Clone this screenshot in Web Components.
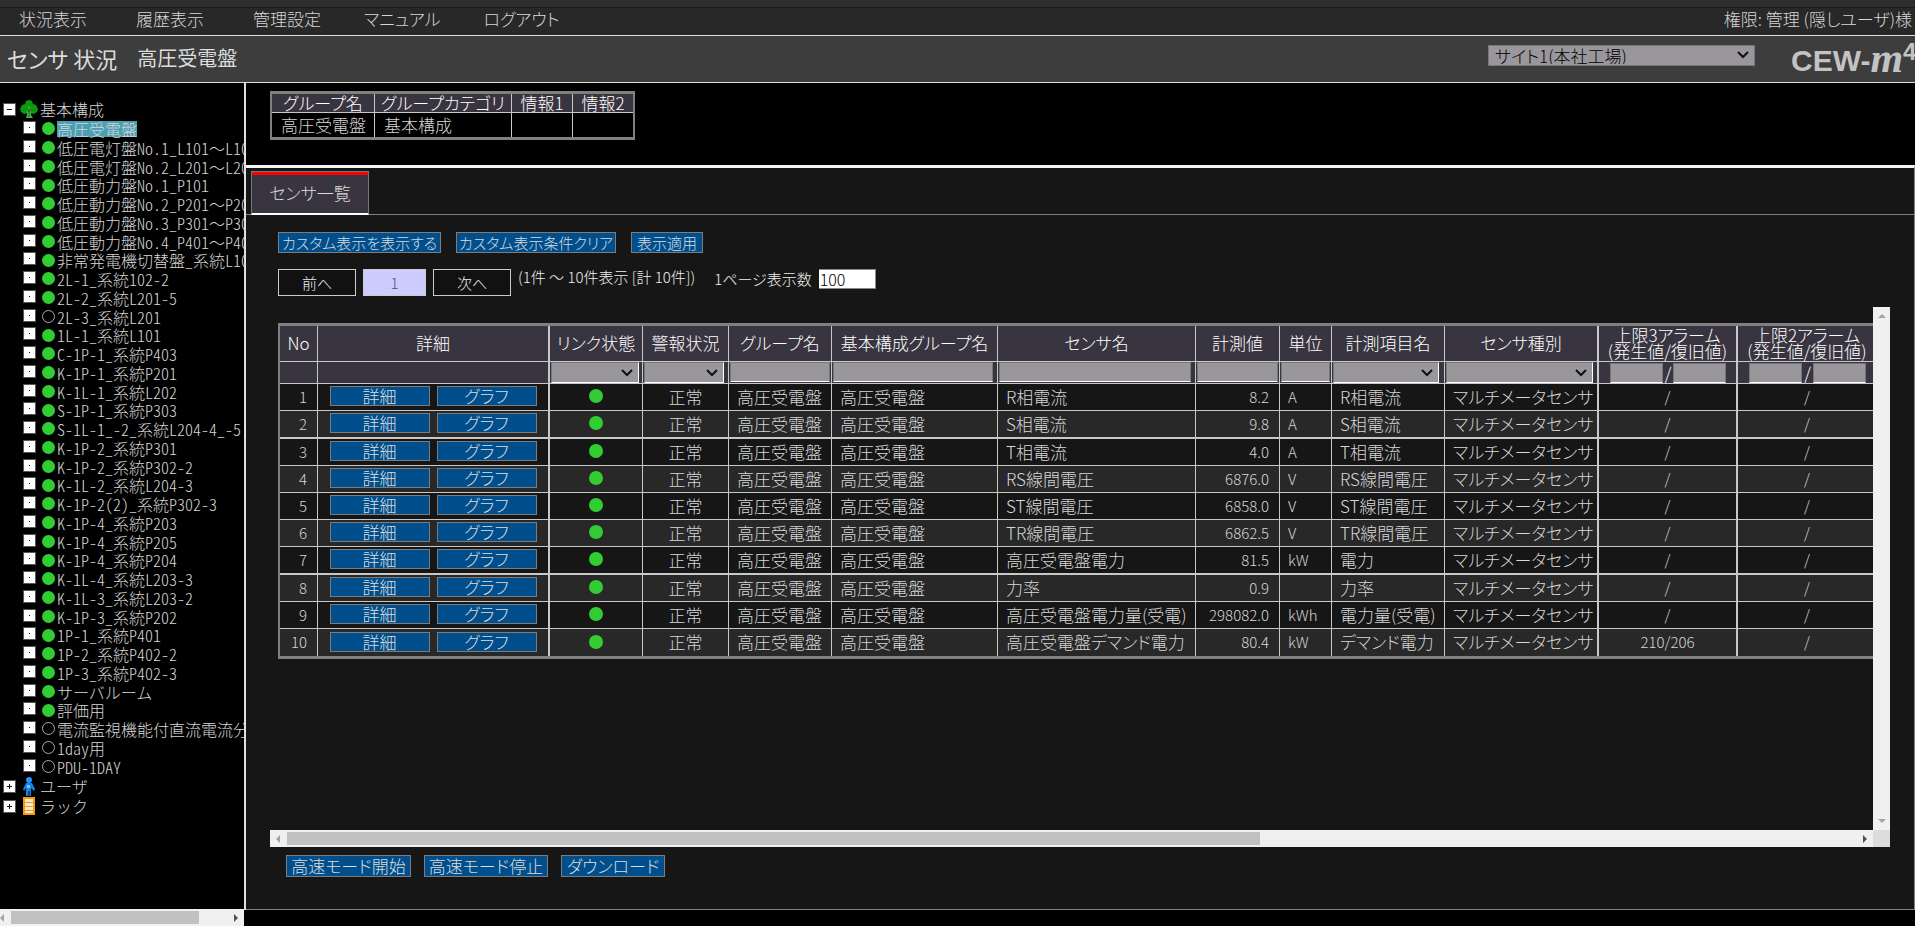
<!DOCTYPE html>
<html lang="ja">
<head>
<meta charset="utf-8">
<title>センサ状況 - CEW-m4</title>
<style>
  html, body { margin: 0; background: #000; }
  body { font-family: "Noto Sans CJK JP", sans-serif; font-size: 17px; color: #d6d6d6; font-weight: 300; }
</style>
</head>
<body>
<monitor-app></monitor-app>
<script>
const define = (name, css, html) => customElements.define(name, class extends HTMLElement {
  connectedCallback() {
    if (this.shadowRoot) return;
    const root = this.attachShadow({ mode: "open" });
    const body = typeof html === "function" ? html(this) : html;
    root.innerHTML = `<style>*{box-sizing:border-box}:host{box-sizing:border-box}${css}</style>${body}`;
  }
});
const CHEVRON = `<svg viewBox="0 0 12 8" width="12" height="8" aria-hidden="true"><path d="M1 1l5 5 5-5" fill="none" stroke="#111" stroke-width="2"/></svg>`;

/* Top menu */
define("menu-bar", `
  :host { display: flex; align-items: center; height: 36px; padding: 2px 3px 0 19px; border-bottom: 1px solid #e0e0e0;
    background: linear-gradient(#2e2e2e 7px, #1c1c1c 7px, #1c1c1c 8px, #282828 8px); font-feature-settings: "palt"; line-height: 24px; }
  nav { display: flex; gap: 49px; flex: 1; }
  a { color: #d6d6d6; text-decoration: none; }
  .kana { margin-left: -6px; }
`, `<nav><a href="#">状況表示</a><a href="#">履歴表示</a><a href="#">管理設定</a><a class="kana" href="#">マニュアル</a><a class="kana" href="#">ログアウト</a></nav><span>権限: 管理 (隠しユーザ)様</span>`);

/* Drop-down with its own arrow */
define("pick-list", `
  :host { display: block; height: 21px; }
  div { display: grid; height: 100%; }
  select, svg { grid-area: 1 / 1; }
  select { appearance: none; width: 100%; min-width: 0; height: 100%; margin: 0; padding: 0 24px 0 6px; border: 1px solid #777; border-radius: 0;
    background: #99979c; color: #000; font: inherit; font-size: 17px; line-height: 17px; font-feature-settings: "palt"; }
  svg { justify-self: end; align-self: center; margin-right: 6px; pointer-events: none; }
  :host([raised]) select { border-color: #777 #fff #fff #777; }
`, el => `<div><select aria-label="${el.getAttribute("label")}"><option>${el.getAttribute("value") || ""}</option></select>${CHEVRON}</div>`);

/* Product logo */
define("brand-logo", `
  :host { display: flex; width: 124px; height: 47px; padding-top: 4px; overflow: hidden; color: #c3c3c3; white-space: nowrap; align-items: center; }
  b { font: bold 30px/40px "Liberation Sans", sans-serif; }
  i { font: italic bold 42px/36px "Liberation Serif", serif; align-self: flex-start; }
  sup { font: bold 24px/24px "Liberation Sans", sans-serif; align-self: flex-start; }
`, `<b>CEW-</b><i>m</i><sup>4</sup>`);

define("title-bar", `
  :host { display: flex; align-items: center; height: 47px; padding-left: 7px; background: #3d3d3d; border-bottom: 1px solid #e0e0e0; color: #dcdcdc; }
  h1, h2 { margin: 0 0 2px; font-weight: 400; font-feature-settings: "palt"; }
  h1 { font-size: 22px; line-height: 32px; }
  h2 { font-size: 20px; line-height: 32px; margin-left: 20px; flex: 1; }
  pick-list { width: 267px; margin: 0 36px 8px 0; }
`, `<h1>センサ 状況</h1><h2>高圧受電盤</h2><pick-list label="サイト" value="サイト1(本社工場)"></pick-list><brand-logo></brand-logo>`);

/* Scroll bar: direction from an attribute, thumb length from --thumb */
define("scroll-strip", `
  :host { display: flex; align-items: center; height: 17px; background: #f0f0f0; }
  :host([vertical]) { flex-direction: column; width: 17px; height: auto; justify-content: space-between; }
  .rail { flex: 1; height: 13px; }
  .thumb { height: 13px; width: var(--thumb, 0); background: #c1c1c1; }
  svg { flex: none; }
`, el => {
  const v = el.hasAttribute("vertical"), end = v ? "#a3a3a3" : "#505050";
  return `<svg width="17" height="17"><path fill="#a3a3a3" d="${v ? "M5 11l4-4 4 4z" : "M10 5l-4 4 4 4z"}"/></svg>
  ${v ? "" : `<div class="rail"><div class="thumb"></div></div>`}
  <svg width="17" height="17"><path fill="${end}" d="${v ? "M5 6l4 4 4-4z" : "M7 5l4 4-4 4z"}"/></svg>`;
});

/* Navigation tree; a leading "-" marks an idle group */
const NODES = ["高圧受電盤","低圧電灯盤No.1_L101～L104","低圧電灯盤No.2_L201～L204","低圧動力盤No.1_P101","低圧動力盤No.2_P201～P204","低圧動力盤No.3_P301～P304","低圧動力盤No.4_P401～P404","非常発電機切替盤_系統L101","2L-1_系統102-2","2L-2_系統L201-5","-2L-3_系統L201","1L-1_系統L101","C-1P-1_系統P403","K-1P-1_系統P201","K-1L-1_系統L202","S-1P-1_系統P303","S-1L-1_-2_系統L204-4_-5","K-1P-2_系統P301","K-1P-2_系統P302-2","K-1L-2_系統L204-3","K-1P-2(2)_系統P302-3","K-1P-4_系統P203","K-1P-4_系統P205","K-1P-4_系統P204","K-1L-4_系統L203-3","K-1L-3_系統L203-2","K-1P-3_系統P202","1P-1_系統P401","1P-2_系統P402-2","1P-3_系統P402-3","サーバルーム","評価用","-電流監視機能付直流電流分電盤","-1day用","-PDU-1DAY"];
const TREE = `<svg width="18" height="18" viewBox="0 0 18 18"><path fill="#0a9a0a" d="M9 0l3 1 1 3 3 1 2 4-1 3-3 2-4-1-1 0-5 1-3-2-1-3 2-4 3-1 1-3z"/><path fill="#4cae4c" d="M7 9l2-3 2 3v6l2 3H6l1-3z"/><path d="M9 8v9M7 9l2 3 2-3" stroke="#0b6b0b" fill="none"/></svg>`;
const USER = `<svg width="18" height="19" viewBox="0 0 18 19"><circle cx="9" cy="3" r="3" fill="#2196ff"/><path fill="#1583e8" d="M6 6h6l3 6-1 2-3-3v8H9.500v-5h-1v5H6v-8l-2 3-1-2z"/><path fill="#7cc4ff" d="M7 8h3v3H7z"/></svg>`;
const RACK = `<svg width="18" height="18" viewBox="0 0 18 18"><path fill="#f59a14" d="M3 0h12v18H3z"/><path fill="#ffeac4" d="M5 2h8v3H5zM5 6h8v3H5zM5 10h8v3H5zM5 14h8v2H5z"/></svg>`;
define("tree-node", `
  :host { display: flex; align-items: center; height: 19px; white-space: nowrap; font-size: 16px; line-height: 16px; font-feature-settings: "hwid"; }
  button { flex: none; width: 13px; height: 13px; padding: 0; border: 1px solid #555; background: #fff; margin: 0 6px 3px 23px; display: grid; place-items: center; }
  .dot { flex: none; width: 13px; height: 13px; border-radius: 50%; background: #32cd32; margin-right: 2px; }
  .wide { font-feature-settings: normal; }
  :host([idle]) .dot { background: none; border: 1px solid #aaa; }
  a { color: #d6d6d6; text-decoration: none; }
  :host([selected]) a { background: #4a9fb3; height: 16px; }
  :host([root]) { height: 20px; }
  :host([root]) button { margin: 0 4px 0 3px; }
  :host([root]) a { margin-left: 2px; }
  svg { flex: none; display: block; }
`, el => {
  const s = el.getAttribute("sign"), d = s === "-" ? "M3 5h5v1H3z" : s === "+" ? "M3 5h5v1H3zM5 3h1v5H5z" : "M5 5h1v1H5z";
  return `<button aria-label="開閉"><svg width="11" height="11"><path d="${d}" fill="#111"/></svg></button>
  ${el.hasAttribute("root") ? "<slot></slot>" : `<span class="dot"></span>`}<a href="#">${el.getAttribute("label").replace("～", `<span class="wide">～</span>`)}</a>`;
});
define("side-tree", `
  :host { display: flex; flex-direction: column; width: 244px; flex: none; overflow: hidden; }
  .list { flex: 1; padding-top: 16px; }
  .kids tree-node:nth-child(4n) { height: 18px; }
  scroll-strip { --thumb: 188px; margin-left: -6px; }
`, `<div class="list"><tree-node root sign="-" label="基本構成">${TREE}</tree-node>
  <div class="kids">${NODES.map((n, i) => { const idle = n[0] === "-"; return `<tree-node label="${idle ? n.slice(1) : n}" ${idle ? "idle" : ""} ${i ? "" : "selected"}></tree-node>`; }).join("")}</div>
  <tree-node root sign="+" label="ユーザ">${USER}</tree-node><tree-node root sign="+" label="ラック">${RACK}</tree-node></div><scroll-strip></scroll-strip>`);

/* Summary of the selected group */
define("group-summary", `
  :host { display: block; padding: 8px 24px 25px; }
  table { border-collapse: separate; border-spacing: 0; border: solid #808080; border-width: 3px 2px; table-layout: fixed; width: 365px; font-feature-settings: "palt"; }
  th, td { padding: 0; height: 24px; line-height: 18px; border-right: 1px solid #c8c8c8; }
  th:last-child, td:last-child { border-right: 0; }
  th { height: 19px; background: #393540; font-weight: 300; color: #fff; border-bottom: 1px solid #c8c8c8; }
  td { padding-left: 9px; }
`, `<table><colgroup><col style="width:103px"><col style="width:137px"><col style="width:61px"><col></colgroup>
  <tr><th>グループ名</th><th>グループカテゴリ</th><th>情報1</th><th>情報2</th></tr>
  <tr><td>高圧受電盤</td><td>基本構成</td><td></td><td></td></tr></table>`);

define("tab-strip", `
  :host { display: flex; padding: 3px 0 0 5px; height: 47px; background: linear-gradient(#808080, #808080) 0 46px / 100% 1px no-repeat; }
  button { width: 118px; height: 44px; border: 1px solid #777; border-bottom: 2px solid #fff; background: linear-gradient(#f00 3px, #393540 3px);
    color: #dcdcdc; font: inherit; font-feature-settings: "palt"; }
`, `<button role="tab" aria-selected="true">センサ一覧</button>`);

define("action-button", `
  :host { display: block; }
  button { display: block; width: 100%; height: var(--h, 22px); padding: 0; border: 1px solid #7c7c7c; background: #004f8c; color: #dcdcdc; font: inherit; line-height: 16px; white-space: nowrap; font-feature-settings: "palt"; }
`, `<button><slot></slot></button>`);

define("page-controls", `
  :host { display: block; padding: 17px 32px 0; font-size: 15px; }
  .row { display: flex; gap: 15px; }
  .pager { margin-top: 16px; gap: 7px; align-items: flex-start; color: #f0f0f0; line-height: 16px; font-feature-settings: "palt"; }
  action-button { --h: 21px; }
  button { height: 27px; width: 78px; padding: 0; border: 1px solid #ccc; background: #111; color: #f0f0f0; font: inherit; line-height: 16px; }
  button.now { width: 63px; background: #ccf; color: #555; }
  label { display: flex; align-items: center; gap: 7px; margin-left: 12px; }
  input { width: 57px; height: 20px; padding: 0 1px; border: 1px solid #888; border-left: 0; font: inherit; font-size: 16px; color: #000; background: #fff; }
`, `<div class="row"><action-button style="width:163px">カスタム表示を表示する</action-button><action-button style="width:160px">カスタム表示条件クリア</action-button><action-button style="width:72px">表示適用</action-button></div>
  <div class="row pager"><button>前へ</button><button class="now">1</button><button>次へ</button><span>(1件 ～ 10件表示 [計 10件])</span><label>1ページ表示数<input value="100"></label></div>`);

/* Sensor list */
const COLS = [
  ["No", 38, "", 0], ["詳細", 232, "", 0], ["リンク状態", 93, "s", 88], ["警報状況", 86, "s", 80], ["グループ名", 103, "i", 100],
  ["基本構成グループ名", 166, "i", 160], ["センサ名", 198, "i", 192], ["計測値", 84, "i", 81], ["単位", 52, "i", 49],
  ["計測項目名", 113, "s", 106], ["センサ種別", 154, "s", 147], ["上限3アラーム<br>(発生値/復旧値)", 139, "p", 53], ["上限2アラーム<br>(発生値/復旧値)", 139, "p", 53]];
const ROWS = [["R相電流","8.2","A","R相電流"],["S相電流","9.8","A","S相電流"],["T相電流","4.0","A","T相電流"],["RS線間電圧","6876.0","V","RS線間電圧"],["ST線間電圧","6858.0","V","ST線間電圧"],["TR線間電圧","6862.5","V","TR線間電圧"],["高圧受電盤電力","81.5","kW","電力"],["力率","0.9","","力率"],["高圧受電盤電力量(受電)","298082.0","kWh","電力量(受電)"],["高圧受電盤デマンド電力","80.4","kW","デマンド電力"]];
const filter = ([name, , kind, w]) => {
  const label = name.replace("<br>", " ");
  return kind === "s" ? `<pick-list raised label="${label}" style="width:${w}px"></pick-list>`
    : kind === "i" ? `<input aria-label="${label}" style="width:${w}px">`
    : kind === "p" ? `<span class="pair"><input aria-label="${label} 発生値" style="width:${w}px">/<input aria-label="${label} 復旧値" style="width:${w}px"></span>` : "";
};
define("sensor-table", `
  :host { display: block; }
  table { border-collapse: separate; border-spacing: 0; table-layout: fixed; width: 1601px; border: solid #808080; border-width: 3px 2px; font-feature-settings: "palt"; }
  th, td { padding: 0; border-right: 1px solid #c8c8c8; border-bottom: 1px solid #c8c8c8; white-space: nowrap; line-height: 17px; }
  tr > :nth-child(2), tr > :nth-child(11), tr > :nth-child(12) { border-right-width: 2px; }
  th { height: 36px; padding-bottom: 2px; background: #393540; color: #fff; font-weight: 300; line-height: 16px; }
  .filter td { height: 22px; background: #393540; padding-left: 1px; vertical-align: top; }
  tbody td { height: 27px; background: #161616; padding: 0 8px 2px; }
  tbody tr:nth-child(even) td { background: #282828; }
  tbody tr:nth-child(5n + 2) td { height: 28px; border-bottom-width: 2px; }
  tbody tr:last-child td { border-bottom: 0; }
  .c { text-align: center; }
  tbody .n { text-align: right; padding-right: 10px; }
  .l { font-size: 15px; }
  .acts { display: flex; justify-content: center; gap: 7px; }
  .acts action-button { width: 100px; --h: 20px; }
  .lamp { display: block; width: 14px; height: 14px; margin: 0 auto; border-radius: 50%; background: #32cd32; }
  input { display: block; height: 20px; margin: 0; padding: 0; border: 1px solid #777; border-bottom-color: #fff; background: #99979c; font: inherit; }
  .pair { display: flex; justify-content: center; align-items: center; gap: 2px; height: 21px; color: #fff; line-height: 17px; }
`, `<table><colgroup>${COLS.map(c => `<col style="width:${c[1]}px">`).join("")}</colgroup>
  <thead><tr>${COLS.map(c => `<th>${c[0]}</th>`).join("")}</tr><tr class="filter">${COLS.map(c => `<td>${filter(c)}</td>`).join("")}</tr></thead>
  <tbody>${ROWS.map((r, i) => `<tr><td class="n l">${i + 1}</td><td><div class="acts"><action-button>詳細</action-button><action-button>グラフ</action-button></div></td>
  <td><span class="lamp" role="img" aria-label="接続"></span></td><td class="c">正常</td><td>高圧受電盤</td><td>高圧受電盤</td><td>${r[0]}</td><td class="n l">${r[1]}</td><td class="l">${r[2]}</td><td>${r[3]}</td><td>マルチメータセンサ</td><td class="c l">${i === 9 ? "210/206" : "/"}</td><td class="c l">/</td></tr>`).join("")}</tbody></table>`);

define("scroll-pane", `
  :host { display: grid; grid-template: 1fr 17px / minmax(0, 1fr) 17px; }
  .view { overflow: hidden; padding: 16px 0 0 8px; }
  scroll-strip { --thumb: 62%; }
  .corner { background: #dcdcdc; }
`, `<div class="view"><slot></slot></div><scroll-strip vertical></scroll-strip><scroll-strip></scroll-strip><div class="corner"></div>`);

define("monitor-app", `
  :host { display: flex; flex-direction: column; min-height: 100vh; }
  main { flex: 1; display: flex; }
  .content { flex: 1; min-width: 0; display: flex; flex-direction: column; border-left: 2px solid #e0e0e0; margin-bottom: 16px; }
  .panel { flex: 1; display: flex; flex-direction: column; background: #161616; border-top: 3px solid #f4f4f4; border-right: 1px solid #808080; border-bottom: 1px solid #808080; }
  scroll-pane { flex: 1; margin: 11px 24px 0; }
  footer { display: flex; gap: 13px; padding: 8px 40px 32px; }
`, `<menu-bar></menu-bar><title-bar></title-bar><main><side-tree></side-tree><section class="content"><group-summary></group-summary>
  <div class="panel"><tab-strip></tab-strip><page-controls></page-controls><scroll-pane><sensor-table></sensor-table></scroll-pane>
  <footer><action-button style="width:125px">高速モード開始</action-button><action-button style="width:124px">高速モード停止</action-button><action-button style="width:104px">ダウンロード</action-button></footer></div></section></main>`);
</script>
</body>
</html>
